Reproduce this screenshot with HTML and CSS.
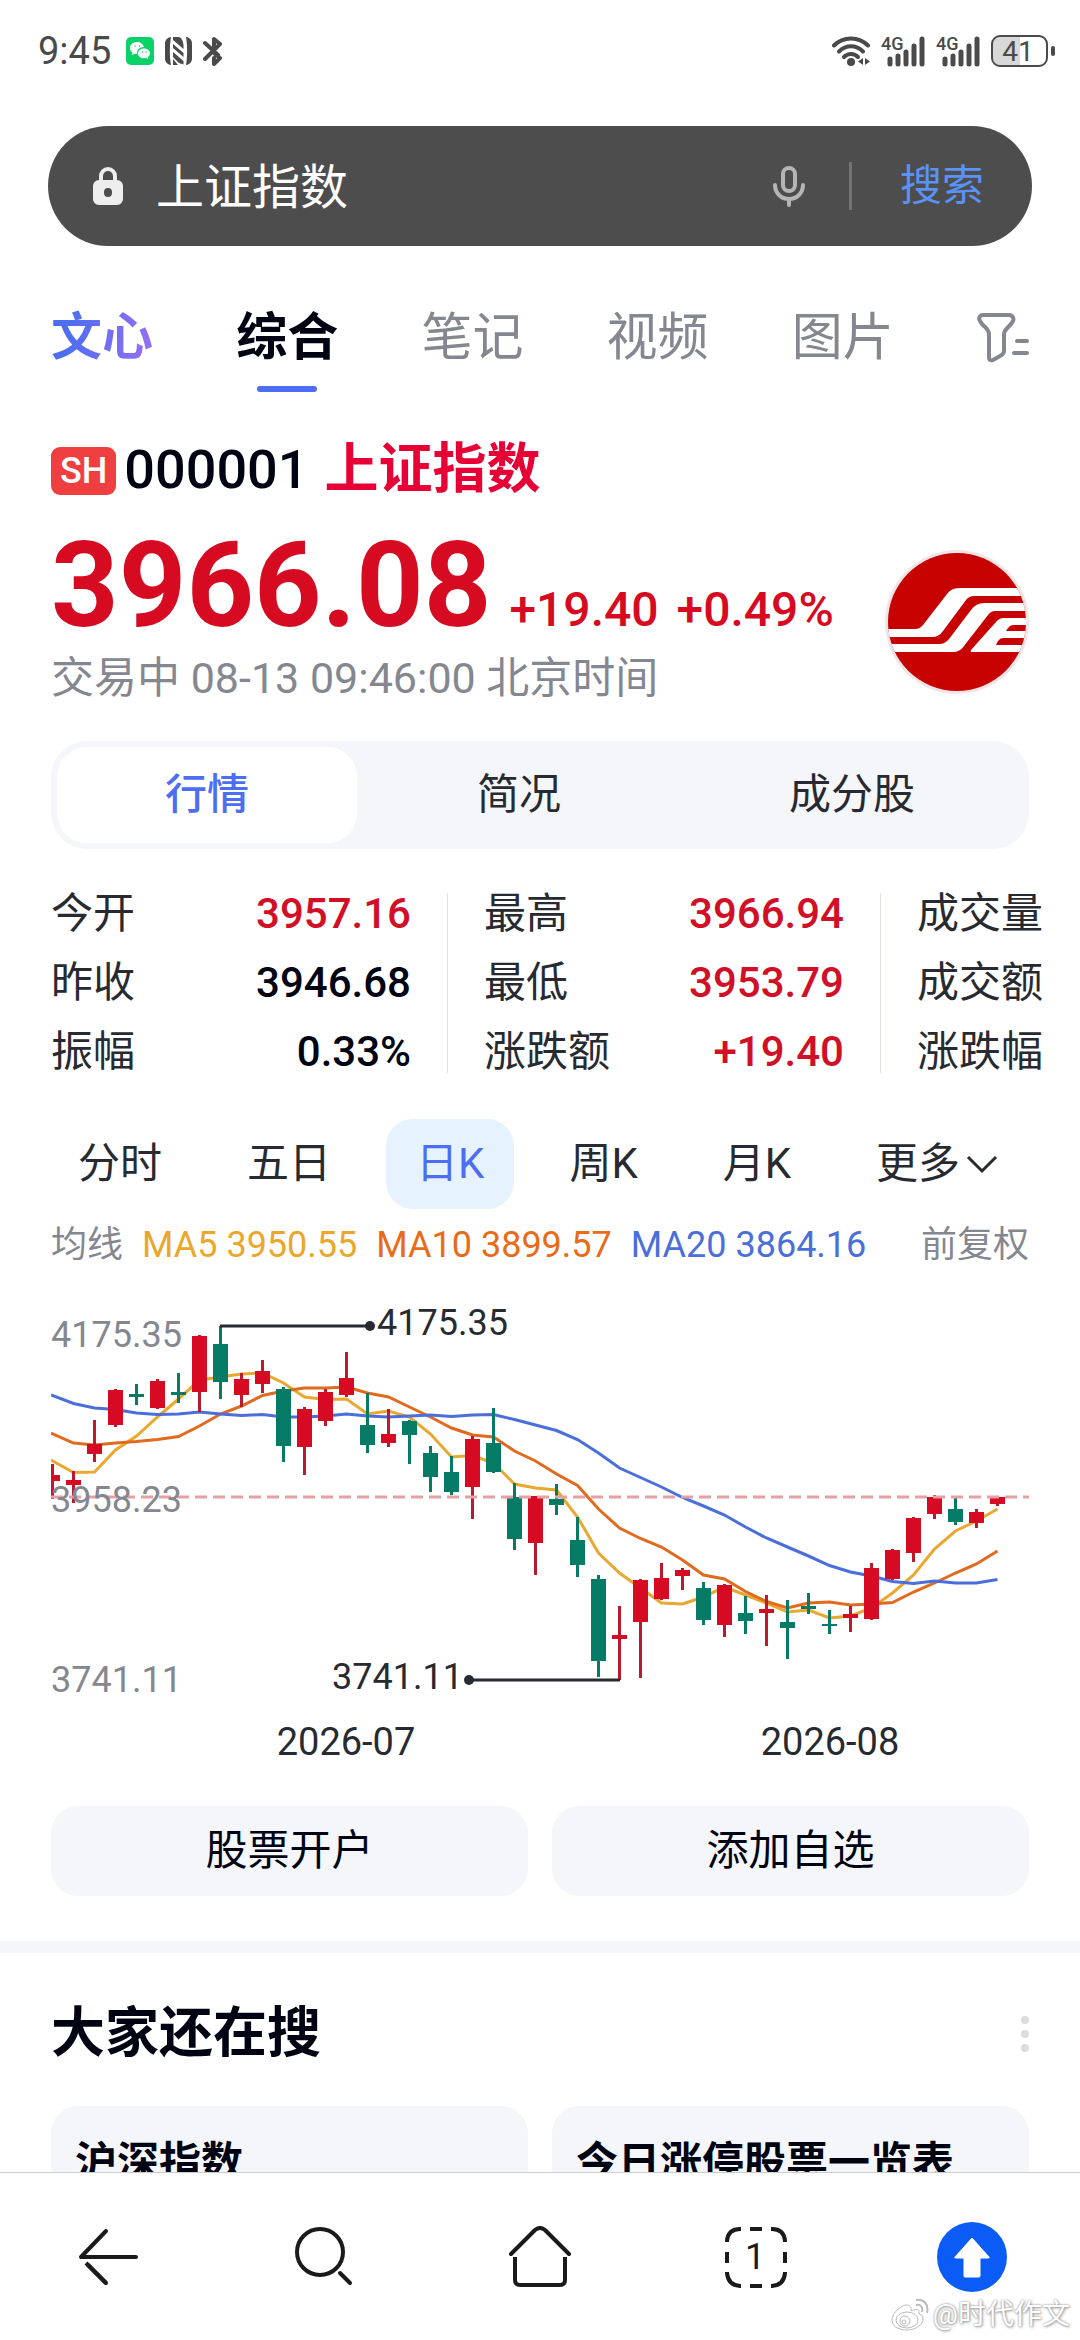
FILE: index.html
```html
<!DOCTYPE html>
<html lang="zh-CN">
<head>
  <meta charset="UTF-8">
  <meta name="viewport" content="width=device-width, initial-scale=1.0">
  <title>上证指数</title>
  <link rel="stylesheet" href="styles.css">
</head>
<body>
  <div class="status-bar">
    <span class="clock">9:45</span>
    <svg class="status-wechat" width="28" height="28" viewBox="0 0 28 28">
      <rect width="28" height="28" rx="5" fill="#09d267"/>
      <path d="M11 5c-4.200 0-7 2.700-7 6 0 2 1 3.500 2.500 4.600L6 18l2.800-1.300c.9.200 1.500.3 2.400.3-.8-4 2.300-7 6.800-6.900C17.200 7 14.500 5 11 5z" fill="#fff"/>
      <path d="M18 11.500c-3.400 0-6 2.200-6 4.900s2.600 4.800 6 4.800c.8 0 1.500-.1 2.200-.3l2 1.100-.5-1.900c1.400-.9 2.300-2.200 2.300-3.700 0-2.700-2.700-4.900-6-4.900z" fill="#fff"/>
      <path d="M8.500 9h1M13 9h1M15.800 15h1M19.600 15h1" stroke="#09d267" stroke-width="1.500"/>
    </svg>
    <svg class="status-nfc" width="27" height="28" viewBox="0 0 27 28">
      <path d="M6 0C4.500 8 4.500 20 6 28 2 27.500 0 25 0 21V7C0 3 2 .5 6 0zM21 0c1.500 8 1.500 20 0 28 4-.5 6-3 6-7V7c0-4-2-6.500-6-7z" fill="#4a4a4a"/>
      <path d="M8 0h6c3 1 4 4 4.500 8v4L8 3zM8 7l10.500 9v4L8 11zM8 15l10.500 9v3.500L14 26 8 20zM8 22l5 6H8z" fill="#4a4a4a"/>
    </svg>
    <svg class="status-bt" width="20" height="30" viewBox="0 0 20 30" fill="none" stroke="#4a4a4a" stroke-width="4" stroke-linecap="round" stroke-linejoin="round">
      <path d="M2 7l13 12M2 23L17 8l-6-5v9M12 18l5 4-6 6v-6"/>
    </svg>
    <svg class="status-wifi" width="38" height="30" viewBox="0 0 38 30">
      <g fill="none" stroke="#4a4a4a" stroke-width="4" stroke-linecap="round">
        <path d="M2 9.500C11 0 27 0 36 9.500"/>
        <path d="M7 15.500c7-7 17-7 24 0"/>
        <path d="M12 21c4-4 10-4 14 0"/>
      </g>
      <circle cx="19" cy="26" r="4" fill="#4a4a4a"/>
      <path d="M31 22v7l-5-3.500zM33 22v7l5-3.500z" fill="#4a4a4a"/>
    </svg>
    <svg class="status-signal" width="44" height="40" viewBox="0 -5 44 40">
      <text x="0" y="14" font-size="18">4G</text>
      <path d="M9 23v5M17 20v8M25 16v12M33 10v18M41 3v25" stroke="#4a4a4a" stroke-width="5" stroke-linecap="round"/>
    </svg>
    <svg class="status-signal" width="44" height="40" viewBox="0 -5 44 40">
      <text x="0" y="14" font-size="18">4G</text>
      <path d="M9 23v5M17 20v8M25 16v12M33 10v18M41 3v25" stroke="#4a4a4a" stroke-width="5" stroke-linecap="round"/>
    </svg>
    <svg class="status-battery" width="64" height="32" viewBox="0 0 64 32">
      <path d="M29 2H9a7 7 0 0 0-7 7v14a7 7 0 0 0 7 7h20z" fill="#d8d8d8"/>
      <rect x="1" y="1" width="55" height="30" rx="8" fill="none" stroke="#4a4a4a" stroke-width="2"/>
      <rect x="60" y="11" width="4" height="10" rx="2" fill="#4a4a4a"/>
      <text x="27" y="26" font-size="28" text-anchor="middle">41</text>
    </svg>
  </div>

  <main class="page">
    <form class="search">
      <svg class="search-lock" width="30" height="40" viewBox="0 0 30 40">
        <path d="M8 16v-6a7 7 0 0 1 14 0v6" fill="none" stroke="#eee" stroke-width="4"/>
        <path fill="#eee" fill-rule="evenodd" d="M6 14h18a6 6 0 0 1 6 6v13a6 6 0 0 1-6 6H6a6 6 0 0 1-6-6V20a6 6 0 0 1 6-6zm9 8a4 4 0 0 0-4 4v1a4 4 0 0 0 8 0v-1a4 4 0 0 0-4-4z"/>
      </svg>
      <input class="search-input" type="text" value="上证指数" aria-label="搜索内容">
      <button class="search-mic" type="button" aria-label="语音搜索">
        <svg width="32" height="42" viewBox="0 0 32 42" fill="none" stroke="#b5b5b5" stroke-width="4" stroke-linecap="round">
          <rect x="10" y="3" width="12" height="23" rx="6"/>
          <path d="M2 20c0 8 6 14 14 14s14-6 14-14M16 34v6"/>
        </svg>
      </button>
      <span class="search-divider"></span>
      <button class="search-submit" type="submit">搜索</button>
    </form>

    <nav class="tabs">
      <a class="tab brand" href="#">文心</a>
      <a class="tab active" href="#">综合</a>
      <a class="tab" href="#">笔记</a>
      <a class="tab" href="#">视频</a>
      <a class="tab" href="#">图片</a>
      <button class="tab-filter" type="button" aria-label="筛选">
        <svg width="52" height="50" viewBox="0 0 52 50" fill="none" stroke="#858790" stroke-width="4" stroke-linecap="round" stroke-linejoin="round">
          <path d="M6 2h26c4 0 5 4 4 6-2 5-9 8-9 13v17c0 3-2 4-4 5l-7 4c-3 1-4 0-4-3V21C12 15 5 13 3 8 1 5 3 2 6 2z"/>
          <path d="M40 28h10M37 40h13"/>
        </svg>
      </button>
    </nav>

    <section class="stock">
      <div class="stock-title">
        <span class="market">SH</span>
        <span class="code">000001</span>
        <h1 class="name">上证指数</h1>
      </div>

      <div class="quote">
        <div class="quote-info">
          <div class="quote-price">
            <span class="price">3966.08</span>
            <span class="change">+19.40</span>
            <span class="change">+0.49%</span>
          </div>
          <p class="quote-time">交易中 08-13 09:46:00 北京时间</p>
        </div>
        <svg class="quote-logo" width="144" height="144" viewBox="0 0 144 144">
          <clipPath id="disc"><circle cx="72" cy="72" r="69"/></clipPath>
          <circle cx="72" cy="72" r="72" fill="#f1e4e7"/>
          <g clip-path="url(#disc)">
            <rect width="144" height="144" fill="#c70000"/>
            <g fill="#fff">
              <path d="M0 79h30q5 0 8-4l24-31q4-6 12-6h70v8H89q-5 0-8 4L58 81q-4 6-11 6H0z"/>
              <path d="M0 94h54q6 0 10-5l22-29q5-7 13-7h45v8h-34q-4 0-7 4L79 96q-4 6-11 6H0z"/>
              <path d="M144 68h-25q-5 0-8 4L86 100q-1 2 1 2h57v-7h-33l2-4q2-3 5-3h26v-7h-23l2-3q2-3 5-3h16z"/>
            </g>
          </g>
        </svg>
      </div>

      <div class="segments">
        <button class="segment active" type="button">行情</button>
        <button class="segment" type="button">简况</button>
        <button class="segment" type="button">成分股</button>
      </div>

      <div class="metrics">
        <dl class="metric-list">
          <div class="metric"><dt>今开</dt><dd class="up">3957.16</dd></div>
          <div class="metric"><dt>昨收</dt><dd>3946.68</dd></div>
          <div class="metric"><dt>振幅</dt><dd>0.33%</dd></div>
        </dl>
        <span class="metric-divider"></span>
        <dl class="metric-list">
          <div class="metric"><dt>最高</dt><dd class="up">3966.94</dd></div>
          <div class="metric"><dt>最低</dt><dd class="up">3953.79</dd></div>
          <div class="metric"><dt>涨跌额</dt><dd class="up">+19.40</dd></div>
        </dl>
        <span class="metric-divider"></span>
        <dl class="metric-list">
          <div class="metric"><dt>成交量</dt></div>
          <div class="metric"><dt>成交额</dt></div>
          <div class="metric"><dt>涨跌幅</dt></div>
        </dl>
      </div>

      <div class="periods">
        <button class="period" type="button">分时</button>
        <button class="period" type="button">五日</button>
        <button class="period active" type="button">日K</button>
        <button class="period" type="button">周K</button>
        <button class="period" type="button">月K</button>
        <button class="period" type="button">更多
          <svg width="32" height="20" viewBox="0 0 32 20" fill="none" stroke="#272a31" stroke-width="3"><path d="M2 3l14 14L30 3"/></svg>
        </button>
      </div>

      <div class="averages">
        <span>均线</span>
        <span class="ma5">MA5 3950.55</span>
        <span class="ma10">MA10 3899.57</span>
        <span class="ma20">MA20 3864.16</span>
        <span class="adjust">前复权</span>
      </div>

      <svg class="chart" viewBox="0 0 978 490" role="img" aria-label="日K线图">
        <!-- moving averages -->
        <g class="lines">
          <polyline class="line-ma5" points="0,180 22.500,192.500 43.500,192 64.500,170 85.500,156 106.500,137 127.500,119 148.500,100 169.500,97 190.500,94 211.500,93 232.500,103 253.500,117 274.500,119.500 295.500,119 316.500,134 337.500,131 358.500,137 379.500,154 400.500,177 421.500,175.500 442.500,183 463.500,204 484.500,208 505.500,210 526.500,237 547.500,273 568.500,293 589.500,308 610.500,323 631.500,324 652.500,317 673.500,307 694.500,315 715.500,323 736.500,332 757.500,330 778.500,338 799.500,336 820.500,328 841.500,313 862.500,295 883.500,269 904.500,251 925.500,241 946.500,229"/>
          <polyline class="line-ma10" points="0,153 22.500,163 43.500,165 64.500,163 85.500,161.500 106.500,159.500 127.500,156.500 148.500,146 169.500,134 190.500,126 211.500,115.500 232.500,111 253.500,108 274.500,108 295.500,107 316.500,113 337.500,117 358.500,127 379.500,137 400.500,148 421.500,155 442.500,157 463.500,171 484.500,181 505.500,194 526.500,205.500 547.500,229 568.500,248 589.500,258.500 610.500,267 631.500,280 652.500,295 673.500,299 694.500,311.500 715.500,321.500 736.500,328 757.500,323 778.500,322 799.500,325 820.500,324 841.500,322.500 862.500,312 883.500,303 904.500,293 925.500,284 946.500,271"/>
          <polyline class="line-ma20" points="0,115 22.500,123.500 43.500,128 64.500,129.500 85.500,133 106.500,134.500 127.500,134 148.500,132 169.500,134 190.500,135.500 211.500,134.500 232.500,137 253.500,137 274.500,136 295.500,134 316.500,136 337.500,137 358.500,136 379.500,135 400.500,136.500 421.500,135 442.500,134.500 463.500,139.500 484.500,145 505.500,150.500 526.500,159.500 547.500,173 568.500,188 589.500,197.500 610.500,207 631.500,217.500 652.500,226 673.500,235 694.500,247 715.500,258 736.500,267 757.500,276 778.500,285.500 799.500,292 820.500,296 841.500,301.500 862.500,303.500 883.500,301 904.500,303 925.500,303 946.500,299.500"/>
        </g>

        <!-- candles: wicks first, then bodies -->
        <path class="wick rise" d="M1.500 184V219M22.500 191V223M43.500 140V182M64.500 109V147M106.500 99V129M148.500 55V132M190.500 93V127M211.500 80V113M253.500 127V195M274.500 109V146M295.500 72V117M337.500 129V167M421.500 156V239M484.500 216V295M568.500 326V400M589.500 299V398M610.500 283V320M631.500 288V310M673.500 304V357M715.500 315V366M799.500 326V352M820.500 283V340M841.500 269V300M862.500 237V282M883.500 215V239M925.500 229V248M946.500 216V226"/>
        <path class="body rise" d="M1.500 195V201M22.500 200V205M43.500 164V174M64.500 110V145M106.500 101V128M148.500 56V112M190.500 99V115M211.500 91V104M253.500 129V167M274.500 112V141M295.500 98V115M337.500 154V163M421.500 159V207M484.500 216V263M568.500 355V359M589.500 300V342M610.500 298V319M631.500 290V296M673.500 305V345M715.500 329V333M799.500 334V338M820.500 288V339M841.500 270V299M862.500 238V273M883.500 217V234M925.500 232V243M946.500 217V224"/>
        <path class="wick fall" d="M85.500 104V125M127.500 93V123M169.500 46V119M232.500 107V182M316.500 113V173M358.500 140V184M379.500 166V212M400.500 176V215M442.500 128V193M463.500 203V270M505.500 204V235M526.500 237V297M547.500 295V397M652.500 302V345M694.500 316V354M736.500 320V379M757.500 313V334M778.500 330V354M904.500 217V245"/>
        <path class="body fall" d="M85.500 114V117M127.500 112V115M169.500 64V102M232.500 109V166M316.500 145V165M358.500 141V155M379.500 173V197M400.500 192V212M442.500 163V192M463.500 217V259M505.500 219V225M526.500 260V285M547.500 299V381M652.500 308V340M694.500 333V341M736.500 342V348M757.500 326V329M778.500 344V346M904.500 229V242"/>
        <path class="last-price" d="M0 217H978"/>

        <!-- high and low callouts -->
        <path class="callout" d="M169 46H319M418 400H569"/>
        <circle class="callout-dot" cx="319" cy="46" r="5"/>
        <circle class="callout-dot" cx="418" cy="400" r="5"/>
        <text class="mark" x="326" y="55">4175.35</text>
        <text class="mark" x="412" y="409" text-anchor="end">3741.11</text>

        <text class="axis" x="0" y="67">4175.35</text>
        <text class="axis" x="0" y="232">3958.23</text>
        <text class="axis" x="0" y="412">3741.11</text>
        <text class="date" x="295" y="475" text-anchor="middle">2026-07</text>
        <text class="date" x="779" y="475" text-anchor="middle">2026-08</text>
      </svg>

      <div class="actions">
        <button class="action" type="button">股票开户</button>
        <button class="action" type="button">添加自选</button>
      </div>
    </section>

    <section class="related">
      <div class="related-header">
        <h2>大家还在搜</h2>
        <button class="related-more" type="button" aria-label="更多">
          <svg width="8" height="36" viewBox="0 0 8 36" fill="#dcdce0"><circle cx="4" cy="4" r="4"/><circle cx="4" cy="18" r="4"/><circle cx="4" cy="32" r="4"/></svg>
        </button>
      </div>
      <div class="related-list">
        <a class="related-item" href="#">沪深指数</a>
        <a class="related-item" href="#">今日涨停股票一览表</a>
      </div>
    </section>
  </main>

  <footer class="toolbar">
    <button class="tool" type="button" aria-label="返回">
      <svg width="62" height="62" viewBox="0 0 62 62" fill="none" stroke="#1a1a1a" stroke-width="4" stroke-linecap="round" stroke-linejoin="round">
        <path d="M29 5L4 31h55"/>
        <path d="M9 37l20 20" stroke-linecap="butt"/><path d="M11 39l18 18"/>
      </svg>
    </button>
    <button class="tool" type="button" aria-label="搜索">
      <svg width="62" height="62" viewBox="0 0 62 62" fill="none" stroke="#1a1a1a" stroke-width="4" stroke-linecap="round">
        <circle cx="27" cy="26" r="23"/>
        <path d="M47 47l10 10"/>
      </svg>
    </button>
    <button class="tool" type="button" aria-label="主页">
      <svg width="66" height="62" viewBox="0 0 66 62" fill="none" stroke="#1a1a1a" stroke-width="4" stroke-linecap="round" stroke-linejoin="round">
        <path d="M4 28L28 4q5-4 10 0l24 24"/>
        <path d="M8 31v23q0 5 5 5h40q5 0 5-5V31" stroke-linecap="butt"/>
      </svg>
    </button>
    <button class="tool" type="button" aria-label="窗口">
      <svg width="62" height="62" viewBox="0 0 62 62">
        <path d="M2 16v-1Q3 3 15 3h1M25 3h12M46 3h1q12 0 13 12v1M60 26v11M60 46v1q-1 12-13 13h-1M37 60H25M16 60h-1Q3 59 2 47v-1M2 37V26" fill="none" stroke="#1a1a1a" stroke-width="4"/>
        <text x="30" y="43" font-size="36" text-anchor="middle" fill="#1a1a1a">1</text>
      </svg>
    </button>
    <button class="tool" type="button" aria-label="回到顶部">
      <svg width="70" height="70" viewBox="0 0 70 70">
        <circle cx="35" cy="35" r="35" fill="#0b5cf7"/>
        <path d="M35 16l17 19q1 1-1 1h-8v18q0 1-1 1H28q-1 0-1-1V36h-8q-2 0-1-1z" fill="#fff" stroke="#fff" stroke-linejoin="round"/>
      </svg>
    </button>
    <div class="watermark">
      <svg width="38" height="34" viewBox="0 0 38 34" fill="#fff" stroke="#bbb" stroke-width="1">
        <path d="M15 7c-7 1-15 10-14 16 1 7 9 9 15 9 9 0 17-6 16-12 0-3-3-4-4-4 1-4-1-6-8-3 1-4-1-6-5-6z"/>
        <ellipse cx="16" cy="22" rx="11" ry="8"/>
        <circle cx="14" cy="23" r="5"/><circle cx="13" cy="24" r="2"/>
        <path d="M25 7c5-1 7 2 6 7M25 2c8-1 13 4 11 13" fill="none" stroke-width="2"/>
      </svg>
      <span>@时代作文</span>
    </div>
  </footer>
</body>
</html>
```
FILE: styles.css
```css
* {
  box-sizing: border-box;
}

body {
  display: flex;
  flex-direction: column;
  height: 100vh;
  margin: 0;
  overflow: hidden;
  background: #fff;
  color: #272a31;
  font-family: Roboto, "Noto Sans CJK SC", sans-serif;
  font-size: 42px;
  line-height: 1;
}

button,
input {
  margin: 0;
  padding: 0;
  border: none;
  background: none;
  color: inherit;
  font: inherit;
}

a {
  color: inherit;
  text-decoration: none;
}

svg {
  display: block;
  flex: none;
}

/* Status bar */
.status-bar {
  display: flex;
  align-items: center;
  flex: none;
  gap: 11px;
  height: 102px;
  padding: 0 25px 0 38px;
  color: #4a4a4a;
}

.clock {
  margin-right: 4px;
  font-size: 38px;
}

.status-wifi {
  margin-left: auto;
}

.status-signal text,
.status-battery text {
  fill: #4a4a4a;
}

.status-signal text {
  font-weight: 500;
}

.page {
  flex: 1;
  min-height: 0;
  padding-top: 24px;
  overflow: hidden;
}

/* Search */
.search {
  display: flex;
  align-items: center;
  height: 120px;
  margin: 0 48px;
  padding: 0 48px 0 45px;
  border-radius: 60px;
  background: #4d4d4d;
}

.search-input {
  flex: 1;
  min-width: 0;
  height: 72px;
  margin-left: 33px;
  padding-bottom: 6px;
  color: #fff;
  font-size: 48px;
  outline: none;
}

.search-divider {
  width: 3px;
  height: 48px;
  margin: 0 48px 0 44px;
  background: #737373;
}

.search-submit {
  color: #5b92f8;
}

/* Tabs */
.tabs {
  display: flex;
  justify-content: space-between;
  align-items: flex-start;
  margin-top: 56px;
  padding: 0 51px;
  color: #858790;
  font-size: 51px;
  line-height: 72px;
}

.tab.active {
  color: #000311;
  font-weight: 700;
}

.tab.active::after {
  content: "";
  display: block;
  width: 60px;
  height: 6px;
  margin: 12px auto 0;
  border-radius: 3px;
  background: #4e6ef2;
}

.tab.brand {
  background: linear-gradient(100deg, #4e6ef2 20%, #9a6ff5);
  background-clip: text;
  -webkit-background-clip: text;
  color: transparent;
  font-weight: 700;
}

.tab-filter {
  margin-top: 11px;
}

/* Stock card */
.stock {
  padding: 46px 51px 45px;
}

.stock-title {
  display: flex;
  align-items: center;
  height: 64px;
}

.market {
  margin-top: 2px;
  padding: 0 9px;
  border-radius: 9px;
  background: #f03f40;
  color: #fff;
  font-size: 36px;
  font-weight: 500;
  line-height: 48px;
}

.code {
  margin: 0 16px 0 8px;
  color: #000311;
  font-size: 54px;
  font-weight: 500;
}

.name {
  margin: 0;
  color: #e60035;
  font-size: 54px;
  font-weight: 700;
}

.quote {
  display: flex;
  align-items: center;
  justify-content: space-between;
  margin-top: 24px;
}

.quote-price {
  display: flex;
  align-items: baseline;
  gap: 18px;
  color: #d60b22;
}

.quote-logo {
  margin-top: 8px;
}

.price {
  font-size: 118px;
  font-weight: 700;
  line-height: 120px;
}

.change {
  font-size: 48px;
  font-weight: 500;
}

.quote-time {
  margin: 0;
  color: #858790;
  font-size: 43px;
  line-height: 64px;
}

.segments {
  display: flex;
  gap: 12px;
  height: 108px;
  margin-top: 31px;
  padding: 6px;
  border-radius: 36px;
  background: #f5f6fa;
}

.segment {
  flex: 1 1 auto;
  border-radius: 30px;
}

.segment.active {
  background: #fff;
  color: #4e6ef2;
  font-weight: 500;
}

.metrics {
  display: flex;
  align-items: center;
  gap: 36px;
  margin: 30px -51px 0 0;
  overflow: hidden;
}

.metric-list {
  flex: none;
  width: 360px;
  margin: 0;
}

.metric {
  display: flex;
  justify-content: space-between;
  line-height: 69px;
}

.metric dd {
  margin: 0;
  color: #000311;
  font-weight: 500;
}

.metric dd.up {
  color: #d10f27;
}

.metric-divider {
  flex: none;
  width: 1px;
  height: 180px;
  background: #e0e1e6;
}

.periods {
  display: flex;
  gap: 25px;
  height: 90px;
  margin: 33px -3px 0;
}

.period {
  display: flex;
  align-items: center;
  gap: 6px;
  padding: 0 30px;
  border-radius: 27px;
  white-space: nowrap;
}

.period.active {
  background: #e7f2ff;
  color: #4e6ef2;
}

.averages {
  display: flex;
  gap: 19px;
  margin-top: 6px;
  color: #858790;
  font-size: 36px;
  line-height: 60px;
  white-space: nowrap;
}

.ma5 {
  color: #eaa72b;
}

.ma10 {
  color: #e86c17;
}

.ma20 {
  color: #4a6fdb;
}

.adjust {
  margin-left: auto;
}

/* Chart */
.chart {
  width: 100%;
  margin-top: 5px;
  font-size: 36px;
}

.lines {
  fill: none;
  stroke-width: 3;
}

.line-ma5 {
  stroke: #e9a82f;
}

.line-ma10 {
  stroke: #e06a1e;
}

.line-ma20 {
  stroke: #4a6fdb;
}

.wick {
  stroke-width: 3;
}

.body {
  stroke-width: 15;
}

.rise {
  stroke: #d60a22;
}

.fall {
  stroke: #057b66;
}

.wick.rise {
  stroke: #b91a2f;
}

.last-price {
  stroke: #e6a0a2;
  stroke-width: 3;
  stroke-dasharray: 12 6;
}

.callout {
  stroke: #272a31;
  stroke-width: 3;
}

.callout-dot,
.mark,
.date {
  fill: #272a31;
}

.date {
  font-size: 38px;
}

.axis {
  fill: #858790;
}

.actions,
.related-list {
  display: grid;
  grid-template-columns: 1fr 1fr;
  gap: 24px;
}

.actions {
  margin-top: 36px;
}

.action {
  height: 90px;
  border-radius: 27px;
  background: #f5f6fa;
  color: #000311;
}

/* Related searches */
.related {
  padding: 45px 51px 0;
  border-top: 12px solid #f5f6fa;
  color: #000311;
}

.related-header {
  display: flex;
  align-items: center;
  justify-content: space-between;
}

.related-header h2 {
  margin: 0;
  font-size: 54px;
  font-weight: 700;
  line-height: 72px;
}

.related-list {
  margin-top: 36px;
}

.related-item {
  height: 120px;
  padding: 30px 24px;
  border-radius: 27px;
  background: #f5f6fa;
  font-weight: 700;
  line-height: 54px;
  white-space: nowrap;
}

/* Bottom toolbar */
.toolbar {
  display: flex;
  position: relative;
  flex: none;
  height: 168px;
  border-top: 1px solid #ccc;
  background: #fff;
}

.tool {
  display: flex;
  flex: 1;
  align-items: center;
  justify-content: center;
}

.watermark {
  display: flex;
  position: absolute;
  right: 10px;
  bottom: 8px;
  align-items: center;
  gap: 4px;
  color: #fff;
  font-size: 28px;
  line-height: 34px;
  text-shadow: 0 0 2px #888, 1px 1px 3px #999;
}
```
